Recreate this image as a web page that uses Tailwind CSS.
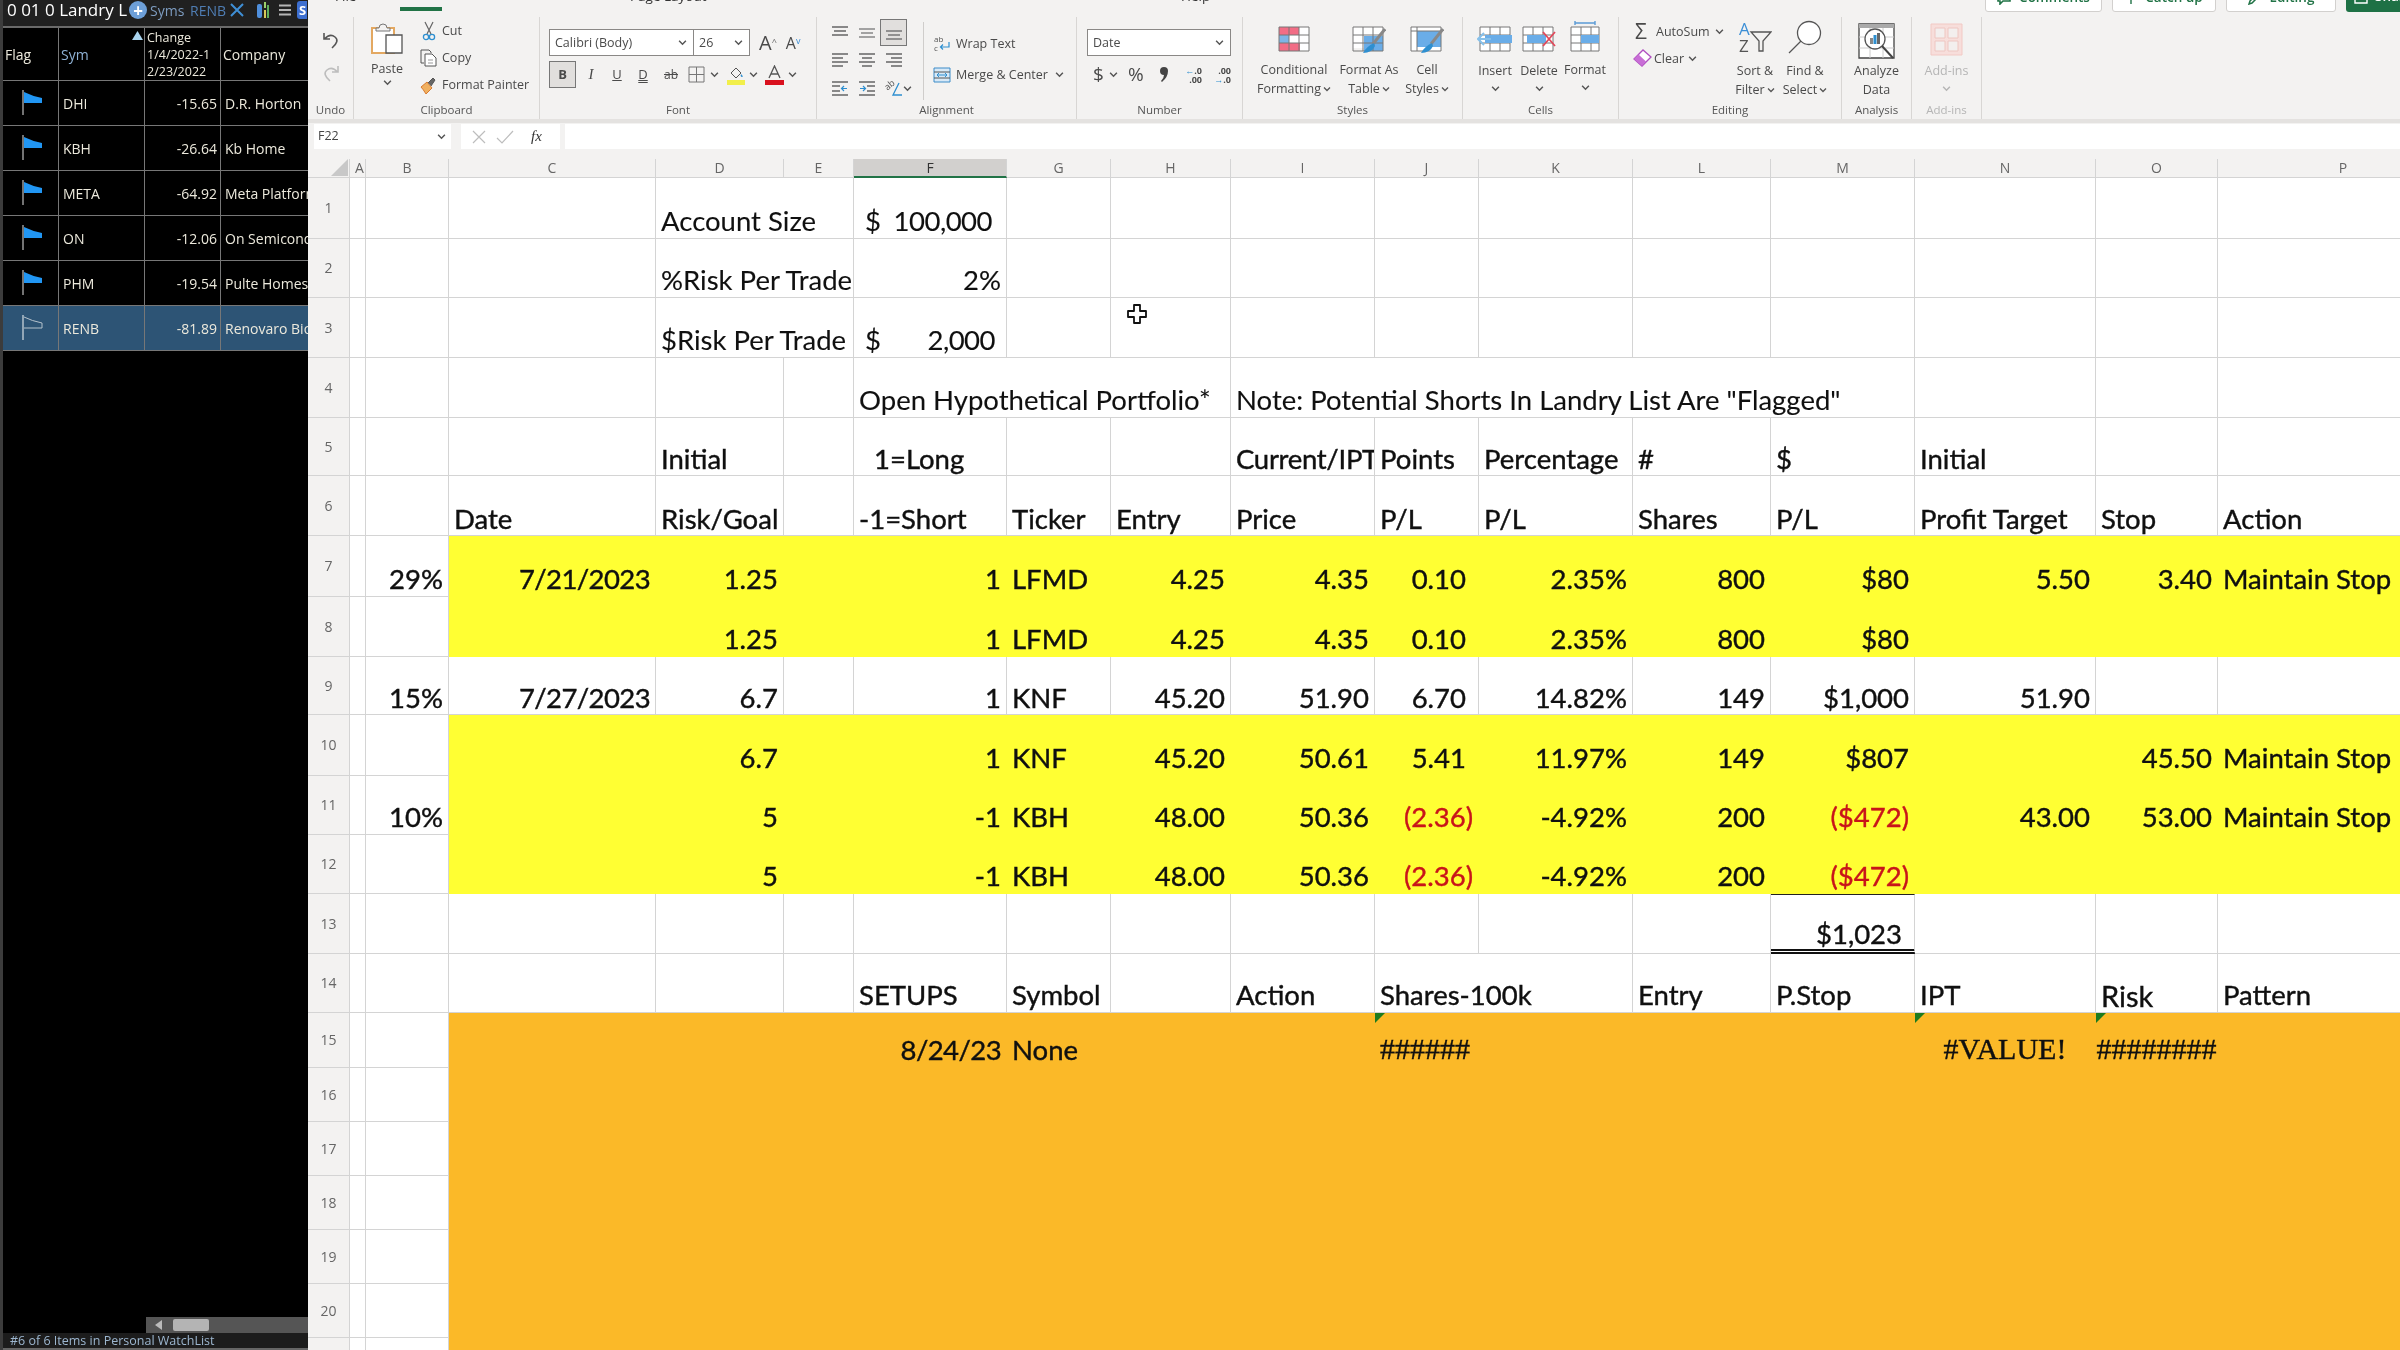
<!DOCTYPE html>
<html>
<head>
<meta charset="utf-8">
<script src="https://cdn.jsdelivr.net/npm/@tailwindcss/browser@4"></script>
</head>
<body class="m-0 bg-white">
<svg class="hidden"><defs>
<symbol id="chev" viewBox="0 0 8 6"><path d="M1 1.5 4 4.5 7 1.5" fill="none" stroke="currentColor" stroke-width="1.3"/></symbol>
</defs></svg>
<div class="flex w-[2400px] h-[1350px] overflow-hidden blur-[0.4px]">

<!-- Watchlist panel -->
<aside class="w-[308px] h-full bg-black flex flex-col shrink-0 border-l-[3px] border-[#3c3c3c] font-['Open_Sans',sans-serif] text-[14px] text-[#ece9dc]">
  <div class="h-[26px] pb-[6px] bg-[#202020] flex items-center pl-[4px] overflow-hidden whitespace-nowrap">
    <span class="text-[17px] text-white w-[122px]">0 01 0 Landry L</span>
    <span class="w-[18px] h-[18px] rounded-full bg-[#6d9fd8] text-white flex items-center justify-center text-[17px] font-bold leading-none shrink-0">+</span>
    <span class="ml-[3px] text-[#7d9cc0] w-[40px]">Syms</span>
    <span class="text-[#4f7db3] w-[40px]">RENB</span>
    <svg width="14" height="14" viewBox="0 0 14 14" class="shrink-0"><path d="M1 1 13 13M13 1 1 13" stroke="#3f8fd6" stroke-width="2"/></svg>
    <svg width="14" height="18" viewBox="0 0 14 18" class="ml-[12px] shrink-0"><rect x="1" y="3" width="5" height="14" rx="2" fill="#4f8fdc"/><rect x="8" y="1" width="2" height="6" fill="#9ccf6a"/><rect x="11" y="4" width="2" height="13" fill="#5fae5a"/><rect x="8" y="9" width="2" height="8" fill="#d6c85a"/></svg>
    <svg width="14" height="14" viewBox="0 0 14 14" class="ml-[8px] shrink-0"><path d="M1 2.5H13M1 7H13M1 11.5H13" stroke="#b5b5b5" stroke-width="2.2"/></svg>
    <span class="ml-[5px] w-[10px] h-[18px] rounded-l-[3px] bg-[#3d6fd0] text-white text-[13px] font-bold leading-[18px] pl-[2px] shrink-0">S</span>
  </div>
  <div class="grid grid-cols-[56px_86px_76px_87px] grid-rows-[53px_45px_45px_45px_45px_45px_45px] border-t-[2px] border-[#6a6a6a] whitespace-nowrap overflow-hidden [&>div]:border-b-[1px] [&>div]:border-[#777] [&>div:not(:nth-child(4n))]:border-r-[1px] [&>div]:flex [&>div]:items-center [&>div]:overflow-hidden">
    <div class="pl-[2px]">Flag</div>
    <div class="pl-[2px] text-[#8fb2d6] relative">Sym<span class="absolute right-[1px] top-[3px] w-[11px] h-[9px] bg-[#a9d3ee] [clip-path:polygon(50%_0,100%_100%,0_100%)]"></span></div>
    <div class="pl-[2px] text-[12.5px] leading-[17px]"><span>Change<br>1/4/2022-1<br>2/23/2022</span></div>
    <div class="pl-[2px]">Company</div>

    <div class="justify-center"><svg width="24" height="28" viewBox="0 0 24 28"><path d="M4 1V26" stroke="#9a9a9a" stroke-width="1.5"/><path d="M5 3Q13 7 23 9V14H5Z" fill="#2196f3"/></svg></div>
    <div class="pl-[4px]">DHI</div><div class="justify-end pr-[3px]">-15.65</div><div class="pl-[4px]">D.R. Horton</div>
    <div class="justify-center"><svg width="24" height="28" viewBox="0 0 24 28"><path d="M4 1V26" stroke="#9a9a9a" stroke-width="1.5"/><path d="M5 3Q13 7 23 9V14H5Z" fill="#2196f3"/></svg></div>
    <div class="pl-[4px]">KBH</div><div class="justify-end pr-[3px]">-26.64</div><div class="pl-[4px]">Kb Home</div>
    <div class="justify-center"><svg width="24" height="28" viewBox="0 0 24 28"><path d="M4 1V26" stroke="#9a9a9a" stroke-width="1.5"/><path d="M5 3Q13 7 23 9V14H5Z" fill="#2196f3"/></svg></div>
    <div class="pl-[4px]">META</div><div class="justify-end pr-[3px]">-64.92</div><div class="pl-[4px]">Meta Platforms</div>
    <div class="justify-center"><svg width="24" height="28" viewBox="0 0 24 28"><path d="M4 1V26" stroke="#9a9a9a" stroke-width="1.5"/><path d="M5 3Q13 7 23 9V14H5Z" fill="#2196f3"/></svg></div>
    <div class="pl-[4px]">ON</div><div class="justify-end pr-[3px]">-12.06</div><div class="pl-[4px]">On Semiconductor</div>
    <div class="justify-center"><svg width="24" height="28" viewBox="0 0 24 28"><path d="M4 1V26" stroke="#9a9a9a" stroke-width="1.5"/><path d="M5 3Q13 7 23 9V14H5Z" fill="#2196f3"/></svg></div>
    <div class="pl-[4px]">PHM</div><div class="justify-end pr-[3px]">-19.54</div><div class="pl-[4px]">Pulte Homes</div>
    <div class="justify-center bg-[#2d5475]"><svg width="24" height="28" viewBox="0 0 24 28"><path d="M4 1V26" stroke="#b5c2cc" stroke-width="1.5"/><path d="M5 3Q13 7 23 9V14H5" fill="none" stroke="#b5c2cc" stroke-width="1"/></svg></div>
    <div class="pl-[4px] bg-[#2d5475]">RENB</div><div class="justify-end pr-[3px] bg-[#2d5475]">-81.89</div><div class="pl-[4px] bg-[#2d5475]">Renovaro Biosciences</div>
  </div>
  <div class="flex-1"></div>
  <div class="h-[16px] ml-[143px] bg-[#555] flex items-center">
    <span class="ml-[9px] w-[7px] h-[10px] bg-[#bbb] [clip-path:polygon(100%_0,100%_100%,0_50%)]"></span>
    <span class="ml-[11px] w-[36px] h-[12px] rounded-[2px] bg-[#b4b4b4]"></span>
  </div>
  <div class="h-[15px] bg-[#1c1c1c] pl-[7px] text-[12.5px] leading-[15px] text-[#9cb6cf] whitespace-nowrap">#6 of 6 Items in Personal WatchList</div>
  <div class="h-[2px] bg-[#666]"></div>
</aside>

<!-- Excel -->
<main class="relative flex-1 flex flex-col min-w-0 overflow-hidden bg-white font-['Open_Sans',sans-serif]">
  <!-- tabs strip -->
  <div class="h-[17px] shrink-0 bg-[#f3f2f1] flex overflow-hidden text-[13.5px] leading-[14px] text-[#333] whitespace-nowrap">
    <span class="ml-[27px] w-[65px] h-[14px] -mt-[11px]">File</span>
    <span class="w-[42px] flex flex-col items-center -mt-[14px]"><span class="h-[21px]">Home</span><span class="w-[42px] h-[4px] bg-[#217346] shrink-0"></span></span>
    <span class="ml-[188px] w-[75px] -mt-[11px]">Page Layout</span>
    <span class="ml-[476px] -mt-[11px]">Help</span>
    <span class="ml-auto flex gap-[10px] -mr-[30px] text-[#217346] font-semibold">
      <span class="w-[117px] h-[32px] -mt-[20px] bg-white rounded-[3px] border border-[#d2d0ce] pt-[9px] flex justify-center gap-[8px]"><svg width="14" height="14" viewBox="0 0 14 14" class="mt-[1px]"><path d="M1 1H13V10H6L3 13V10H1Z" fill="none" stroke="#217346" stroke-width="1.6"/></svg>Comments</span>
      <span class="w-[104px] h-[32px] -mt-[20px] bg-white rounded-[3px] border border-[#d2d0ce] pt-[9px] flex justify-center gap-[8px]"><svg width="12" height="14" viewBox="0 0 12 14" class="mt-[1px]"><path d="M6 1V13M1 7H11" stroke="#217346" stroke-width="1.4"/></svg>Catch up</span>
      <span class="w-[110px] h-[32px] -mt-[20px] bg-white rounded-[3px] border border-[#d2d0ce] pt-[9px] flex justify-center gap-[8px]"><svg width="14" height="14" viewBox="0 0 14 14" class="mt-[1px]"><path d="M11 1 13 3 4 12 1 13 2 10Z" fill="none" stroke="#217346" stroke-width="1.5"/></svg>Editing</span>
      <span class="w-[84px] h-[32px] -mt-[20px] bg-[#1e7145] rounded-[3px] pt-[9px] pl-[8px] text-white flex gap-[7px]"><svg width="14" height="14" viewBox="0 0 14 14" class="mt-[1px]"><path d="M1 5H13V13H1Z" fill="none" stroke="#fff" stroke-width="1.4"/></svg>Share</span>
    </span>
  </div>
  <!-- ribbon -->
  <div class="h-[102px] shrink-0 bg-[#f3f2f1] flex text-[12.5px] leading-[19px] text-[#4a4a4a] whitespace-nowrap [&>section]:flex [&>section]:flex-col [&>section]:border-r-[1px] [&>section]:border-[#d8d6d4] [&>section]:shrink-0">
    <!-- Undo -->
    <section class="w-[46px]">
      <div class="h-[84px] flex flex-col items-center pt-[13px] gap-[13px]">
        <svg width="20" height="20" viewBox="0 0 20 20"><path d="M3 3V9H9M3.5 9Q9 3 14 7T11 18" fill="none" stroke="#555" stroke-width="1.6"/></svg>
        <svg width="20" height="20" viewBox="0 0 20 20"><path d="M17 3V9H11M16.5 9Q11 3 6 7T9 18" fill="none" stroke="#bdbdbd" stroke-width="1.6"/></svg>
      </div>
      <div class="h-[18px] text-center text-[11.5px] leading-[18px] text-[#555]">Undo</div>
    </section>
    <!-- Clipboard -->
    <section class="w-[186px]">
      <div class="h-[84px] flex">
        <div class="w-[58px] ml-[4px] flex flex-col items-center pt-[5px]">
          <svg width="34" height="34" viewBox="0 0 34 34"><path d="M2 6H24V31H2Z" fill="#fff" stroke="#e3a861" stroke-width="2"/><path d="M9 6Q9 2 13 2T17 6H20V9H6V6Z" fill="#f3f2f1" stroke="#777" stroke-width="1"/><path d="M16 13H32V31H16Z" fill="#fff" stroke="#555" stroke-width="1.3"/></svg>
          <span class="mt-[3px]">Paste</span>
          <svg width="9" height="7" class="mt-[1px] text-[#555]"><use href="#chev"/></svg>
        </div>
        <div class="ml-[4px] flex flex-col">
          <div class="h-[27px] flex items-center gap-[4px]"><svg width="18" height="20" viewBox="0 0 18 20"><path d="M5 1 11 13M13 1 7 13" stroke="#666" stroke-width="1.2"/><circle cx="6" cy="16" r="2.6" fill="none" stroke="#2e8fd0" stroke-width="1.3"/><circle cx="12" cy="16" r="2.6" fill="none" stroke="#2e8fd0" stroke-width="1.3"/></svg>Cut</div>
          <div class="h-[27px] flex items-center gap-[4px]"><svg width="18" height="20" viewBox="0 0 18 20"><path d="M1 2H9L11 4V5M1 2V15H4" fill="none" stroke="#555"/><path d="M5 6H12L16 10V18H5Z" fill="#fff" stroke="#555"/><path d="M8 12H13M8 15H13" stroke="#999"/></svg>Copy</div>
          <div class="h-[27px] flex items-center gap-[4px]"><svg width="18" height="20" viewBox="0 0 18 20"><path d="M1 12 7 7 12 13 6 19Q3 14 1 12Z" fill="#f0b060" stroke="#d87a30"/><path d="M8 8 13 3 15 5 11 11" fill="#666" stroke="#555"/></svg>Format Painter</div>
        </div>
      </div>
      <div class="h-[18px] text-center text-[11.5px] leading-[18px] text-[#555]">Clipboard</div>
    </section>
    <!-- Font -->
    <section class="w-[277px]">
      <div class="h-[84px] pl-[9px] pt-[12px]">
        <div class="flex items-center h-[27px]">
          <div class="w-[201px] h-[27px] bg-white border border-[#8a8886] flex items-center">
            <span class="w-[144px] h-full flex items-center pl-[5px] pr-[6px] border-r border-[#8a8886] justify-between">Calibri (Body)<svg width="9" height="7" class="text-[#555]"><use href="#chev"/></svg></span>
            <span class="flex-1 flex items-center justify-between pl-[5px] pr-[6px]">26<svg width="9" height="7" class="text-[#555]"><use href="#chev"/></svg></span>
          </div>
          <span class="ml-[9px] text-[20px] leading-none">A<sup class="text-[9px] text-[#666]">^</sup></span>
          <span class="ml-[9px] text-[16px] leading-none">A<sup class="text-[9px] text-[#3b8ed6]">v</sup></span>
        </div>
        <div class="flex items-center h-[27px] mt-[5px] font-['Liberation_Serif',serif] text-[15px]">
          <span class="w-[27px] h-[27px] bg-[#e1dfdd] border border-[#777] flex items-center justify-center font-['Open_Sans',sans-serif] font-bold text-[13px]">B</span>
          <span class="ml-[8px] w-[14px] italic text-center">I</span>
          <span class="ml-[12px] w-[14px] underline text-center font-['Open_Sans',sans-serif] text-[13px]">U</span>
          <span class="ml-[12px] w-[14px] underline decoration-double text-center font-['Open_Sans',sans-serif] text-[13px]">D</span>
          <span class="ml-[12px] w-[18px] line-through text-center font-['Open_Sans',sans-serif] text-[12px]">ab</span>
          <svg width="17" height="17" viewBox="0 0 17 17" class="ml-[8px]"><path d="M1 1H16V16H1ZM8.5 1V16M1 8.5H16" fill="none" stroke="#777" stroke-width="1"/></svg>
          <svg width="9" height="7" class="ml-[5px] text-[#555]"><use href="#chev"/></svg>
          <svg width="18" height="20" viewBox="0 0 18 20" class="ml-[8px]"><path d="M4 8 9 3 14 8 9 13Z" fill="#f3f2f1" stroke="#555"/><path d="M14 9Q17 12 15 12T14 9Z" fill="#2e8fd0"/><rect x="0" y="15" width="18" height="5" fill="#f2ef4a"/></svg>
          <svg width="9" height="7" class="ml-[4px] text-[#555]"><use href="#chev"/></svg>
          <svg width="19" height="20" viewBox="0 0 19 20" class="ml-[7px]"><path d="M4 13 9.5 1 15 13M6 9H13" fill="none" stroke="#555" stroke-width="1.3"/><rect x="0" y="15" width="19" height="5" fill="#d9111e"/></svg>
          <svg width="9" height="7" class="ml-[4px] text-[#555]"><use href="#chev"/></svg>
        </div>
      </div>
      <div class="h-[18px] text-center text-[11.5px] leading-[18px] text-[#555]">Font</div>
    </section>
    <!-- Alignment -->
    <section class="w-[260px]">
      <div class="h-[84px] flex">
        <div class="ml-[9px] mt-[2px] w-[81px] grid grid-cols-[27px_27px_27px] grid-rows-[27px_28px_28px] place-items-center">
          <svg width="16" height="14" viewBox="0 0 16 14"><path d="M0 1H16M2 5H14M0 9H16" stroke="#666" stroke-width="1.4"/></svg>
          <svg width="16" height="14" viewBox="0 0 16 14"><path d="M0 3H16M2 7H14M0 11H16" stroke="#888" stroke-width="1.4"/></svg>
          <div class="w-[27px] h-[27px] bg-[#e1dfdd] border border-[#777] flex items-center justify-center"><svg width="16" height="14" viewBox="0 0 16 14"><path d="M0 5H16M2 9H14M0 13H16" stroke="#777" stroke-width="1.4"/></svg></div>
          <svg width="16" height="14" viewBox="0 0 16 14"><path d="M0 1H16M0 5H11M0 9H16M0 13H11" stroke="#666" stroke-width="1.4"/></svg>
          <svg width="16" height="14" viewBox="0 0 16 14"><path d="M0 1H16M3 5H13M0 9H16M3 13H13" stroke="#666" stroke-width="1.4"/></svg>
          <svg width="16" height="14" viewBox="0 0 16 14"><path d="M0 1H16M5 5H16M0 9H16M5 13H16" stroke="#666" stroke-width="1.4"/></svg>
          <svg width="16" height="15" viewBox="0 0 16 15"><path d="M0 1H16M0 14H16M0 5H8M0 10H8" stroke="#666" stroke-width="1.3"/><path d="M15 7.5H10M12 5 9.5 7.5 12 10" fill="none" stroke="#2e8fd0" stroke-width="1.2"/></svg>
          <svg width="16" height="15" viewBox="0 0 16 15"><path d="M0 1H16M0 14H16M8 5H16M8 10H16" stroke="#666" stroke-width="1.3"/><path d="M1 7.5H6M4 5 6.5 7.5 4 10" fill="none" stroke="#2e8fd0" stroke-width="1.2"/></svg>
          <div class="flex items-center"><svg width="18" height="20" viewBox="0 0 18 20"><text x="0" y="10" font-size="9" fill="#555" transform="rotate(-40 5 8)">ab</text><path d="M14 5 8 17H17" fill="none" stroke="#2e8fd0" stroke-width="1.3"/></svg><svg width="9" height="7" class="text-[#555] -mr-[10px]"><use href="#chev"/></svg></div>
        </div>
        <div class="ml-[16px] mt-[5px] h-[78px] w-[1px] bg-[#cfcdcb]"></div>
        <div class="ml-[9px] flex flex-col">
          <div class="h-[31px] mt-[11px] flex items-center gap-[6px]"><svg width="17" height="18" viewBox="0 0 17 18"><text x="1" y="7" font-size="8" fill="#555">ab</text><text x="1" y="16" font-size="8" fill="#555">c</text><path d="M16 7V12H8M10 9.5 7.5 12 10 14.5" fill="none" stroke="#2e8fd0" stroke-width="1.2"/></svg>Wrap Text</div>
          <div class="h-[31px] flex items-center gap-[5px]"><svg width="18" height="16" viewBox="0 0 18 16"><path d="M1 1H17V15H1Z" fill="#d8e9f7" stroke="#3d8cc8"/><path d="M1 5H17M1 11H17" stroke="#555"/><path d="M4 8H14M6 6 4 8 6 10M12 6 14 8 12 10" fill="none" stroke="#2e8fd0"/></svg>Merge &amp; Center<svg width="9" height="7" class="ml-[2px] text-[#555]"><use href="#chev"/></svg></div>
        </div>
      </div>
      <div class="h-[18px] text-center text-[11.5px] leading-[18px] text-[#555]">Alignment</div>
    </section>
    <!-- Number -->
    <section class="w-[166px]">
      <div class="h-[84px] pl-[10px] pt-[12px]">
        <div class="w-[144px] h-[27px] bg-white border border-[#8a8886] flex items-center justify-between pl-[5px] pr-[6px]">Date<svg width="9" height="7" class="text-[#555]"><use href="#chev"/></svg></div>
        <div class="flex items-center mt-[5px] h-[27px] pl-[6px]">
          <span class="text-[19px] w-[12px]">$</span>
          <svg width="9" height="7" class="ml-[4px] text-[#555]"><use href="#chev"/></svg>
          <span class="ml-[10px] text-[19px] w-[20px]">%</span>
          <svg width="10" height="17" viewBox="0 0 10 17" class="ml-[11px] shrink-0"><path d="M5 1A4 4 0 0 1 9 5Q9 11 3 16L2 15Q5 12 5 9A4 4 0 0 1 5 1Z" fill="#444"/></svg>
          <span class="ml-[9px] w-[24px] shrink-0 text-[9px] leading-[9px] font-bold text-right whitespace-nowrap"><span class="text-[#2e8fd0]">←</span>.0<br>.00</span>
          <span class="ml-[5px] w-[24px] shrink-0 text-[9px] leading-[9px] font-bold text-right whitespace-nowrap">.00<br><span class="text-[#2e8fd0]">→</span>.0</span>
        </div>
      </div>
      <div class="h-[18px] text-center text-[11.5px] leading-[18px] text-[#555]">Number</div>
    </section>
    <!-- Styles -->
    <section class="w-[220px]">
      <div class="h-[84px] flex pl-[7px]">
        <div class="w-[88px] flex flex-col items-center pt-[9px]">
          <svg width="32" height="26" viewBox="0 0 32 26"><path d="M1 1H31V25H1Z" fill="#fff"/><path d="M1 1H21V9H1ZM1 17H22V25H1Z" fill="#f26d85"/><path d="M1 9H11V17H1Z" fill="#7eb5e6"/><path d="M1 1H31V25H1ZM11 1V25M21 1V25M1 9H31M1 17H31" fill="none" stroke="#777" stroke-width="1"/></svg>
          <span class="mt-[8px]">Conditional</span>
          <span class="flex items-center gap-[2px]">Formatting<svg width="8" height="6" class="text-[#555]"><use href="#chev"/></svg></span>
        </div>
        <div class="w-[62px] flex flex-col items-center pt-[9px]">
          <svg width="34" height="27" viewBox="0 0 34 27"><path d="M1 1H31V22H1Z" fill="#fff"/><path d="M12 10H31V25H12Z" fill="#6aade8"/><path d="M1 1H31V25H1ZM11 1V25M21 1V25M1 9H31M1 17H31" fill="none" stroke="#777" stroke-width="1"/><path d="M33 3 21 18" stroke="#888" stroke-width="3"/><path d="M22 17Q15 20 11 27Q20 27 23 20Z" fill="#2e8fd0"/></svg>
          <span class="mt-[7px]">Format As</span>
          <span class="flex items-center gap-[2px]">Table<svg width="8" height="6" class="text-[#555]"><use href="#chev"/></svg></span>
        </div>
        <div class="w-[54px] flex flex-col items-center pt-[9px]">
          <svg width="34" height="27" viewBox="0 0 34 27"><path d="M1 1H31V25H1Z" fill="#fff"/><path d="M7 5H31V21H7Z" fill="#6aade8"/><path d="M1 1H31V25H1ZM1 5H31M7 1V25" fill="none" stroke="#777" stroke-width="1"/><path d="M33 3 21 18" stroke="#888" stroke-width="3"/><path d="M22 17Q15 20 11 27Q20 27 23 20Z" fill="#2e8fd0"/></svg>
          <span class="mt-[7px]">Cell</span>
          <span class="flex items-center gap-[2px]">Styles<svg width="8" height="6" class="text-[#555]"><use href="#chev"/></svg></span>
        </div>
      </div>
      <div class="h-[18px] text-center text-[11.5px] leading-[18px] text-[#555]">Styles</div>
    </section>
    <!-- Cells -->
    <section class="w-[156px]">
      <div class="h-[84px] flex pl-[10px]">
        <div class="w-[44px] flex flex-col items-center pt-[9px]">
          <svg width="36" height="26" viewBox="0 0 36 26"><path d="M3 1H33V25H3ZM13 1V25M23 1V25M3 9H33M3 17H33" fill="#fff" stroke="#777"/><path d="M8 9H35V17H8Z" fill="#6aade8"/><path d="M14 13H2M7 7 1 13 7 19" fill="none" stroke="#86c0ea" stroke-width="2"/></svg>
          <span class="mt-[9px]">Insert</span>
          <svg width="9" height="7" class="mt-[5px] text-[#555]"><use href="#chev"/></svg>
        </div>
        <div class="w-[44px] flex flex-col items-center pt-[9px]">
          <svg width="34" height="26" viewBox="0 0 34 26"><path d="M1 1H31V25H1ZM11 1V25M21 1V25M1 9H31M1 17H31" fill="#fff" stroke="#777"/><path d="M5 9H24V17H5Z" fill="#6aade8"/><path d="M21 6 33 20M33 6 21 20" stroke="#e2485a" stroke-width="1.8"/></svg>
          <span class="mt-[9px]">Delete</span>
          <svg width="9" height="7" class="mt-[5px] text-[#555]"><use href="#chev"/></svg>
        </div>
        <div class="w-[48px] flex flex-col items-center pt-[3px]">
          <svg width="32" height="32" viewBox="0 0 32 32"><path d="M6 3H26M6 1V5M26 1V5" fill="none" stroke="#5b9bd5" stroke-width="1.4"/><path d="M2 7H30V31H2ZM12 7V31M22 7V31M2 15H30M2 23H30" fill="#fff" stroke="#777"/><path d="M12 15H30V23H12Z" fill="#6aade8"/></svg>
          <span class="mt-[8px]">Format</span>
          <svg width="9" height="7" class="mt-[5px] text-[#555]"><use href="#chev"/></svg>
        </div>
      </div>
      <div class="h-[18px] text-center text-[11.5px] leading-[18px] text-[#555]">Cells</div>
    </section>
    <!-- Editing -->
    <section class="w-[223px]">
      <div class="h-[84px] flex pl-[16px]">
        <div class="w-[95px] flex flex-col pt-[2px]">
          <div class="h-[24px] flex items-center gap-[4px]"><span class="text-[21px] w-[17px] leading-none">Σ</span>AutoSum<svg width="9" height="7" class="ml-[1px] text-[#555]"><use href="#chev"/></svg></div>
          <div class="h-[30px] flex items-center gap-[2px]"><svg width="19" height="18" viewBox="0 0 19 18" class="-ml-[2px]"><path d="M1 10 10 1 18 8 9 17Z" fill="#fff" stroke="#b04fc0" stroke-width="1.3"/><path d="M1 10 5.5 5.5 13 12.5 9 17Z" fill="#c86ed6"/></svg>Clear<svg width="9" height="7" class="ml-[2px] text-[#555]"><use href="#chev"/></svg></div>
        </div>
        <div class="w-[50px] flex flex-col items-center pt-[3px]">
          <svg width="34" height="33" viewBox="0 0 34 33"><text x="1" y="15" font-size="17" fill="#3c8fd6" font-family="Open Sans">A</text><text x="1" y="32" font-size="17" fill="#555" font-family="Open Sans">Z</text><path d="M13 12H33L25 21V31H21V21Z" fill="none" stroke="#555" stroke-width="1.3"/></svg>
          <span class="mt-[8px]">Sort &amp;</span>
          <span class="flex items-center gap-[2px]">Filter<svg width="8" height="6" class="text-[#555]"><use href="#chev"/></svg></span>
        </div>
        <div class="w-[50px] flex flex-col items-center pt-[3px]">
          <svg width="34" height="34" viewBox="0 0 34 34"><circle cx="21" cy="13" r="11.5" fill="#fff" stroke="#555" stroke-width="1.3"/><path d="M13 21 1 33" stroke="#555" stroke-width="1.3"/></svg>
          <span class="mt-[7px]">Find &amp;</span>
          <span class="flex items-center gap-[2px]">Select<svg width="8" height="6" class="text-[#555]"><use href="#chev"/></svg></span>
        </div>
      </div>
      <div class="h-[18px] text-center text-[11.5px] leading-[18px] text-[#555]">Editing</div>
    </section>
    <!-- Analysis -->
    <section class="w-[70px]">
      <div class="h-[84px] flex flex-col items-center pt-[6px]">
        <svg width="37" height="36" viewBox="0 0 37 36"><path d="M1 1H36V35H1Z" fill="#fff" stroke="#444" stroke-width="1.3"/><rect x="1" y="1" width="35" height="4" fill="#aaa"/><path d="M1 14H36M1 25H36M12 5V35M25 5V35" stroke="#ccc"/><circle cx="17" cy="16" r="10" fill="#fff" stroke="#555" stroke-width="1.3"/><rect x="12" y="15" width="3" height="6" fill="#888"/><rect x="15.5" y="12" width="3" height="9" fill="#2e8fd0"/><rect x="19" y="10" width="3" height="11" fill="#666"/><path d="M24 23 35 35" stroke="#444" stroke-width="2"/></svg>
        <span class="mt-[2px]">Analyze</span>
        <span>Data</span>
      </div>
      <div class="h-[18px] text-center text-[11.5px] leading-[18px] text-[#555]">Analysis</div>
    </section>
    <!-- Add-ins -->
    <section class="w-[70px] text-[#b5b5b5]">
      <div class="h-[84px] flex flex-col items-center pt-[6px]">
        <svg width="33" height="33" viewBox="0 0 33 33"><path d="M1 1H32V32H1Z" fill="#f7dedb" stroke="#f2c9c4"/><path d="M5 5H15V15H5ZM18 5H28V15H18ZM5 18H15V28H5ZM18 18H28V28H18Z" fill="#f3efee" stroke="#eec6c1"/></svg>
        <span class="mt-[5px]">Add-ins</span>
        <svg width="9" height="7" class="mt-[5px]"><use href="#chev"/></svg>
      </div>
      <div class="h-[18px] text-center text-[11.5px] leading-[18px]">Add-ins</div>
    </section>
  </div>
  <div class="h-[4px] shrink-0 bg-[#e4e2e0]"></div>
  <!-- formula bar -->
  <div class="h-[36px] shrink-0 bg-[#f3f2f1] flex items-start pt-[1px] pl-[6px] text-[12.5px] text-[#444]">
    <div class="w-[137px] h-[25px] bg-white flex items-center justify-between pl-[4px] pr-[5px]">F22<svg width="9" height="7" class="text-[#555]"><use href="#chev"/></svg></div>
    <div class="ml-[10px] w-[99px] h-[25px] bg-white flex items-center pl-[10px] gap-[9px]">
      <svg width="16" height="16" viewBox="0 0 16 16"><path d="M2 2 14 14M14 2 2 14" stroke="#bdbdbd" stroke-width="1.2"/></svg>
      <svg width="18" height="16" viewBox="0 0 18 16"><path d="M1 9 6 14 17 2" fill="none" stroke="#bdbdbd" stroke-width="1.2"/></svg>
      <span class="font-['Liberation_Serif',serif] italic text-[15px] ml-[8px] text-[#333]">fx</span>
    </div>
    <div class="ml-[5px] flex-1 h-[25px] bg-white"></div>
  </div>
  <!-- sheet -->
  <table class="shrink-0 table-fixed w-[2161px] border-separate border-spacing-0 font-['Lato',sans-serif] text-[27.5px] leading-none text-[#101010] [-webkit-text-stroke:0.4px_#101010] [&_td]:border-r [&_td]:border-b [&_td]:border-[#d4d4d4] [&_td]:align-bottom [&_td]:px-[5px] [&_td]:pb-[4px] [&_td]:whitespace-nowrap [&_td]:overflow-hidden [&_tr>td:first-child]:bg-[#f3f2f1] [&_tr>td:first-child]:align-middle [&_tr>td:first-child]:text-center [&_tr>td:first-child]:pb-0 [&_tr>td:first-child]:text-[14px] [&_tr>td:first-child]:[-webkit-text-stroke:0] [&_tr>td:first-child]:text-[#666] [&_tr>td:first-child]:font-['Open_Sans',sans-serif] [&_tr:first-child>td]:bg-[#f3f2f1] [&_tr:first-child>td]:align-middle [&_tr:first-child>td]:text-center [&_tr:first-child>td]:pb-0 [&_tr:first-child>td]:text-[14px] [&_tr:first-child>td]:[-webkit-text-stroke:0] [&_tr:first-child>td]:text-[#666] [&_tr:first-child>td]:font-['Open_Sans',sans-serif]">
    <colgroup><col class="w-[42px]"><col class="w-[16px]"><col class="w-[83px]"><col class="w-[207px]"><col class="w-[128px]"><col class="w-[70px]"><col class="w-[153px]"><col class="w-[104px]"><col class="w-[120px]"><col class="w-[144px]"><col class="w-[104px]"><col class="w-[154px]"><col class="w-[138px]"><col class="w-[144px]"><col class="w-[181px]"><col class="w-[122px]"><col class="w-[251px]"></colgroup>
    <tbody>
    <tr class="h-[19px]"><td class="relative"><span class="absolute right-[1px] bottom-[1px] w-[17px] h-[17px] bg-[#c8c8c8] [clip-path:polygon(100%_0,100%_100%,0_100%)]"></span></td><td>A</td><td>B</td><td>C</td><td>D</td><td>E</td><td class="bg-[#d2d0ce]! text-[#333]! border-b-[2px]! border-b-[#217346]!">F</td><td>G</td><td>H</td><td>I</td><td>J</td><td>K</td><td>L</td><td>M</td><td>N</td><td>O</td><td>P</td></tr>
    <tr class="h-[61px] [&>td:not(:first-child)]:[-webkit-text-stroke:0.1px_#101010]"><td>1</td><td></td><td></td><td></td><td colspan="2">Account Size</td><td><span class="flex justify-between pl-[6px] pr-[9px]"><span>$</span><span class="tracking-[-0.5px]">100,000</span></span></td><td></td><td></td><td></td><td></td><td></td><td></td><td></td><td></td><td></td><td></td></tr>
    <tr class="h-[59px] [&>td:not(:first-child)]:[-webkit-text-stroke:0.1px_#101010]"><td>2</td><td></td><td></td><td></td><td colspan="2">%Risk Per Trade</td><td class="text-right">2%</td><td></td><td></td><td></td><td></td><td></td><td></td><td></td><td></td><td></td><td></td></tr>
    <tr class="h-[60px] [&>td:not(:first-child)]:[-webkit-text-stroke:0.1px_#101010]"><td>3</td><td></td><td></td><td></td><td colspan="2">$Risk Per Trade</td><td><span class="flex justify-between pl-[6px] pr-[6px]"><span>$</span><span class="tracking-[-0.5px]">2,000</span></span></td><td></td><td></td><td></td><td></td><td></td><td></td><td></td><td></td><td></td><td></td></tr>
    <tr class="h-[60px] [&>td:not(:first-child)]:[-webkit-text-stroke:0.1px_#101010]"><td>4</td><td></td><td></td><td></td><td></td><td></td><td colspan="3">Open Hypothetical Portfolio*</td><td colspan="5">Note: Potential Shorts In Landry List Are "Flagged"</td><td></td><td></td><td></td></tr>
    <tr class="h-[58px] [&>td:not(:first-child)]:pb-[3px]!"><td>5</td><td></td><td></td><td></td><td>Initial</td><td></td><td class="pl-[20px]!">1=Long</td><td></td><td></td><td class="tracking-[-0.3px]">Current/IPT</td><td>Points</td><td>Percentage</td><td>#</td><td>$</td><td>Initial</td><td></td><td></td></tr>
    <tr class="h-[60px] [&>td:not(:first-child)]:pb-[3px]!"><td>6</td><td></td><td></td><td>Date</td><td>Risk/Goal</td><td></td><td>-1=Short</td><td>Ticker</td><td>Entry</td><td>Price</td><td>P/L</td><td>P/L</td><td>Shares</td><td>P/L</td><td>Profit Target</td><td>Stop</td><td>Action</td></tr>
    <tr class="h-[61px] [&>td:nth-child(n+4)]:bg-[#ffff33] [&>td:nth-child(n+4)]:border-[#ffff33]"><td>7</td><td></td><td class="text-right">29%</td><td class="text-right tracking-[-0.6px]">7/21/2023</td><td class="text-right">1.25</td><td></td><td class="text-right">1</td><td>LFMD</td><td class="text-right">4.25</td><td class="text-right">4.35</td><td class="text-right pr-[12px]!">0.10</td><td class="text-right">2.35%</td><td class="text-right">800</td><td class="text-right">$80</td><td class="text-right">5.50</td><td class="text-right">3.40</td><td>Maintain Stop</td></tr>
    <tr class="h-[60px] [&>td:nth-child(n+4)]:bg-[#ffff33] [&>td:nth-child(n+4)]:border-[#ffff33]"><td>8</td><td></td><td></td><td></td><td class="text-right">1.25</td><td></td><td class="text-right">1</td><td>LFMD</td><td class="text-right">4.25</td><td class="text-right">4.35</td><td class="text-right pr-[12px]!">0.10</td><td class="text-right">2.35%</td><td class="text-right">800</td><td class="text-right">$80</td><td></td><td></td><td></td></tr>
    <tr class="h-[58px] [&>td:not(:first-child)]:pb-[3px]!"><td>9</td><td></td><td class="text-right">15%</td><td class="text-right tracking-[-0.6px]">7/27/2023</td><td class="text-right">6.7</td><td></td><td class="text-right">1</td><td>KNF</td><td class="text-right">45.20</td><td class="text-right">51.90</td><td class="text-right pr-[12px]!">6.70</td><td class="text-right">14.82%</td><td class="text-right">149</td><td class="text-right">$1,000</td><td class="text-right">51.90</td><td></td><td></td></tr>
    <tr class="h-[61px] [&>td:nth-child(n+4)]:bg-[#ffff33] [&>td:nth-child(n+4)]:border-[#ffff33]"><td>10</td><td></td><td></td><td></td><td class="text-right">6.7</td><td></td><td class="text-right">1</td><td>KNF</td><td class="text-right">45.20</td><td class="text-right">50.61</td><td class="text-right pr-[12px]!">5.41</td><td class="text-right">11.97%</td><td class="text-right">149</td><td class="text-right">$807</td><td></td><td class="text-right">45.50</td><td>Maintain Stop</td></tr>
    <tr class="h-[59px] [&>td:nth-child(n+4)]:bg-[#ffff33] [&>td:nth-child(n+4)]:border-[#ffff33]"><td>11</td><td></td><td class="text-right">10%</td><td></td><td class="text-right">5</td><td></td><td class="text-right">-1</td><td>KBH</td><td class="text-right">48.00</td><td class="text-right">50.36</td><td class="text-right text-[#c8141a] [-webkit-text-stroke:0.4px_#c8141a]">(2.36)</td><td class="text-right">-4.92%</td><td class="text-right">200</td><td class="text-right text-[#c8141a] [-webkit-text-stroke:0.4px_#c8141a]">($472)</td><td class="text-right">43.00</td><td class="text-right">53.00</td><td>Maintain Stop</td></tr>
    <tr class="h-[59px] [&>td:nth-child(n+4)]:bg-[#ffff33] [&>td:nth-child(n+4)]:border-[#ffff33]"><td>12</td><td></td><td></td><td></td><td class="text-right">5</td><td></td><td class="text-right">-1</td><td>KBH</td><td class="text-right">48.00</td><td class="text-right">50.36</td><td class="text-right text-[#c8141a] [-webkit-text-stroke:0.4px_#c8141a]">(2.36)</td><td class="text-right">-4.92%</td><td class="text-right">200</td><td class="text-right text-[#c8141a] [-webkit-text-stroke:0.4px_#c8141a]">($472)</td><td></td><td></td><td></td></tr>
    <tr class="h-[60px]"><td>13</td><td></td><td></td><td></td><td></td><td></td><td></td><td></td><td></td><td></td><td></td><td></td><td></td><td class="text-right pr-[12px]! pb-[2px]! border-t! border-t-[#222]! border-b-[5px]! border-double! border-b-[#111]!">$1,023</td><td></td><td></td><td></td></tr>
    <tr class="h-[59px]"><td>14</td><td></td><td></td><td></td><td></td><td></td><td>SETUPS</td><td>Symbol</td><td></td><td>Action</td><td colspan="2">Shares-100k</td><td>Entry</td><td>P.Stop</td><td>IPT</td><td class="text-[29px]! pb-[2px]!">Risk</td><td>Pattern</td></tr>
    <tr class="h-[55px] [&>td:nth-child(n+4)]:bg-[#fbb928] [&>td:nth-child(n+4)]:border-[#fbb928]"><td>15</td><td></td><td></td><td></td><td></td><td></td><td class="text-right tracking-[-0.6px]">8/24/23</td><td>None</td><td></td><td></td><td class="relative text-[30px]! pb-[3px]! font-['Liberation_Serif',serif]"><span class="absolute left-0 top-0 w-[10px] h-[10px] bg-[#1e7b1e] [clip-path:polygon(0_0,100%_0,0_100%)]"></span>######</td><td></td><td></td><td></td><td class="relative text-center text-[30px]! pb-[3px]! font-['Liberation_Serif',serif]"><span class="absolute left-0 top-0 w-[10px] h-[10px] bg-[#1e7b1e] [clip-path:polygon(0_0,100%_0,0_100%)]"></span>#VALUE!</td><td class="relative text-center text-[30px]! pb-[3px]! px-0! font-['Liberation_Serif',serif]"><span class="absolute left-0 top-0 w-[10px] h-[10px] bg-[#1e7b1e] [clip-path:polygon(0_0,100%_0,0_100%)]"></span>########</td><td></td></tr>
    <tr class="h-[54px] [&>td:nth-child(n+4)]:bg-[#fbb928] [&>td:nth-child(n+4)]:border-[#fbb928]"><td>16</td><td></td><td></td><td></td><td></td><td></td><td></td><td></td><td></td><td></td><td></td><td></td><td></td><td></td><td></td><td></td><td></td></tr>
    <tr class="h-[54px] [&>td:nth-child(n+4)]:bg-[#fbb928] [&>td:nth-child(n+4)]:border-[#fbb928]"><td>17</td><td></td><td></td><td></td><td></td><td></td><td></td><td></td><td></td><td></td><td></td><td></td><td></td><td></td><td></td><td></td><td></td></tr>
    <tr class="h-[54px] [&>td:nth-child(n+4)]:bg-[#fbb928] [&>td:nth-child(n+4)]:border-[#fbb928]"><td>18</td><td></td><td></td><td></td><td></td><td></td><td></td><td></td><td></td><td></td><td></td><td></td><td></td><td></td><td></td><td></td><td></td></tr>
    <tr class="h-[54px] [&>td:nth-child(n+4)]:bg-[#fbb928] [&>td:nth-child(n+4)]:border-[#fbb928]"><td>19</td><td></td><td></td><td></td><td></td><td></td><td></td><td></td><td></td><td></td><td></td><td></td><td></td><td></td><td></td><td></td><td></td></tr>
    <tr class="h-[54px] [&>td:nth-child(n+4)]:bg-[#fbb928] [&>td:nth-child(n+4)]:border-[#fbb928]"><td>20</td><td></td><td></td><td></td><td></td><td></td><td></td><td></td><td></td><td></td><td></td><td></td><td></td><td></td><td></td><td></td><td></td></tr>
    <tr class="h-[54px] [&>td:nth-child(n+4)]:bg-[#fbb928] [&>td:nth-child(n+4)]:border-[#fbb928]"><td></td><td></td><td></td><td></td><td></td><td></td><td></td><td></td><td></td><td></td><td></td><td></td><td></td><td></td><td></td><td></td><td></td></tr>
    </tbody>
  </table>
  <!-- mouse cursor -->
  <svg width="20" height="20" viewBox="0 0 20 20" class="absolute left-[819px] top-[304px]"><path d="M7 1H13V7H19V13H13V19H7V13H1V7H7Z" fill="#fff" stroke="#111" stroke-width="1.8" stroke-linejoin="round"/></svg>
</main>
</div>
</body>
</html>
